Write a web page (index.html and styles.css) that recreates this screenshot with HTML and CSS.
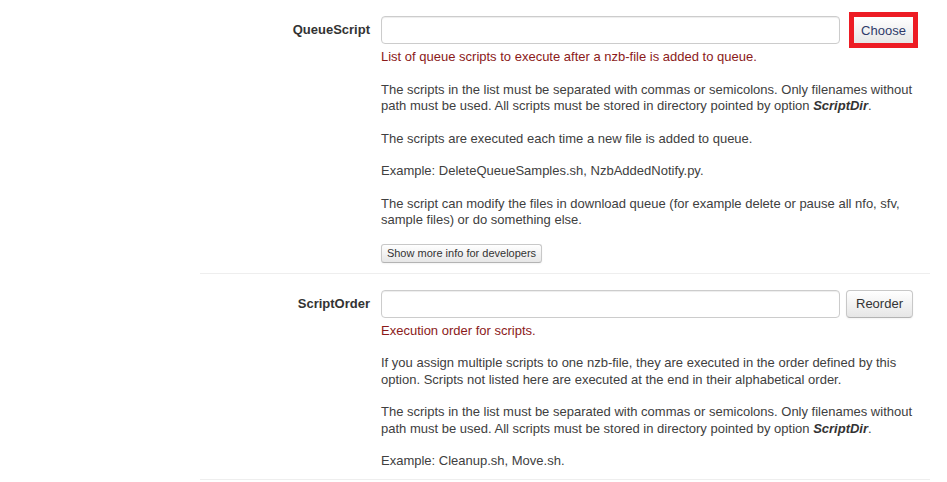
FILE: index.html
```html
<!DOCTYPE html>
<html>
<head>
<meta charset="utf-8">
<link rel="stylesheet" href="styles.css">
</head>
<body>
<div class="form">
  <div class="group">
    <label class="label">QueueScript</label>
    <div class="controls">
      <div class="line">
        <input class="field" type="text">
        <button class="btn btn-marked">Choose</button>
      </div>
      <p class="help first">List of queue scripts to execute after a nzb-file is added to queue.</p>
      <p class="help">The scripts in the list must be separated with commas or semicolons. Only filenames without path must be used. All scripts must be stored in directory pointed by option <b><i>ScriptDir</i></b>.</p>
      <p class="help">The scripts are executed each time a new file is added to queue.</p>
      <p class="help">Example: DeleteQueueSamples.sh, NzbAddedNotify.py.</p>
      <p class="help">The script can modify the files in download queue (for example delete or pause all nfo, sfv, sample files) or do something else.</p>
      <button class="btn btn-mini">Show more info for developers</button>
    </div>
  </div>
  <div class="group">
    <label class="label">ScriptOrder</label>
    <div class="controls">
      <div class="line">
        <input class="field" type="text">
        <button class="btn">Reorder</button>
      </div>
      <p class="help first">Execution order for scripts.</p>
      <p class="help">If you assign multiple scripts to one nzb-file, they are executed in the order defined by this option. Scripts not listed here are executed at the end in their alphabetical order.</p>
      <p class="help">The scripts in the list must be separated with commas or semicolons. Only filenames without path must be used. All scripts must be stored in directory pointed by option <b><i>ScriptDir</i></b>.</p>
      <p class="help last">Example: Cleanup.sh, Move.sh.</p>
    </div>
  </div>
</div>
</body>
</html>
```

FILE: styles.css
```css
html, body {
  margin: 0;
  padding: 0;
  background: #fff;
}
body {
  font-family: "Liberation Sans", Arial, sans-serif;
  font-size: 13px;
  line-height: 16.5px;
  color: #404040;
}
.form {
  width: 730px;
  margin-left: 200px;
}
.group {
  display: grid;
  grid-template-columns: 170px 1fr;
  column-gap: 11px;
  padding: 16px 0 10px;
  border-bottom: 1px solid #eeeeee;
}
.group + .group {
  padding-bottom: 9px;
}
.label {
  text-align: right;
  font-weight: bold;
  line-height: 28px;
  color: #333;
}
.controls {
  min-width: 0;
}
.line {
  display: flex;
  align-items: center;
  height: 28px;
}
.field {
  box-sizing: border-box;
  flex: none;
  width: 459px;
  height: 28px;
  margin: 0;
  border: 1px solid #cccccc;
  border-radius: 4px;
  box-shadow: inset 0 1px 1px rgba(0,0,0,0.075);
  background: #fff;
}
.btn {
  box-sizing: border-box;
  flex: none;
  margin: 0 0 0 6px;
  height: 28px;
  padding: 0 9px;
  font-family: "Liberation Sans", Arial, sans-serif;
  font-size: 13px;
  color: #333;
  background: linear-gradient(#ffffff, #e6e6e6);
  border: 1px solid #c8c8c8;
  border-bottom-color: #b3b3b3;
  border-radius: 4px;
  box-shadow: inset 0 1px 0 rgba(255,255,255,0.2), 0 1px 2px rgba(0,0,0,0.05);
}
.btn-marked {
  margin-left: 9px;
  height: 36px;
  width: 69px;
  padding: 0;
  border: 5px solid #ed1c24;
  border-radius: 0;
  box-shadow: none;
  color: #2f3a6a;
}
.help {
  margin: 0 0 16px;
  width: 541px;
}
.help.first {
  margin-top: 5px;
  color: #8b1a1a;
}
.help.last {
  margin-bottom: 0;
}
.help b {
  color: #333;
}
.btn-mini {
  display: block;
  margin: 0;
  height: 19px;
  width: 161px;
  padding: 0;
  font-size: 11px;
  line-height: 15px;
  border-radius: 3px;
}
.help + .btn-mini {
  margin-top: -1px;
}
```
